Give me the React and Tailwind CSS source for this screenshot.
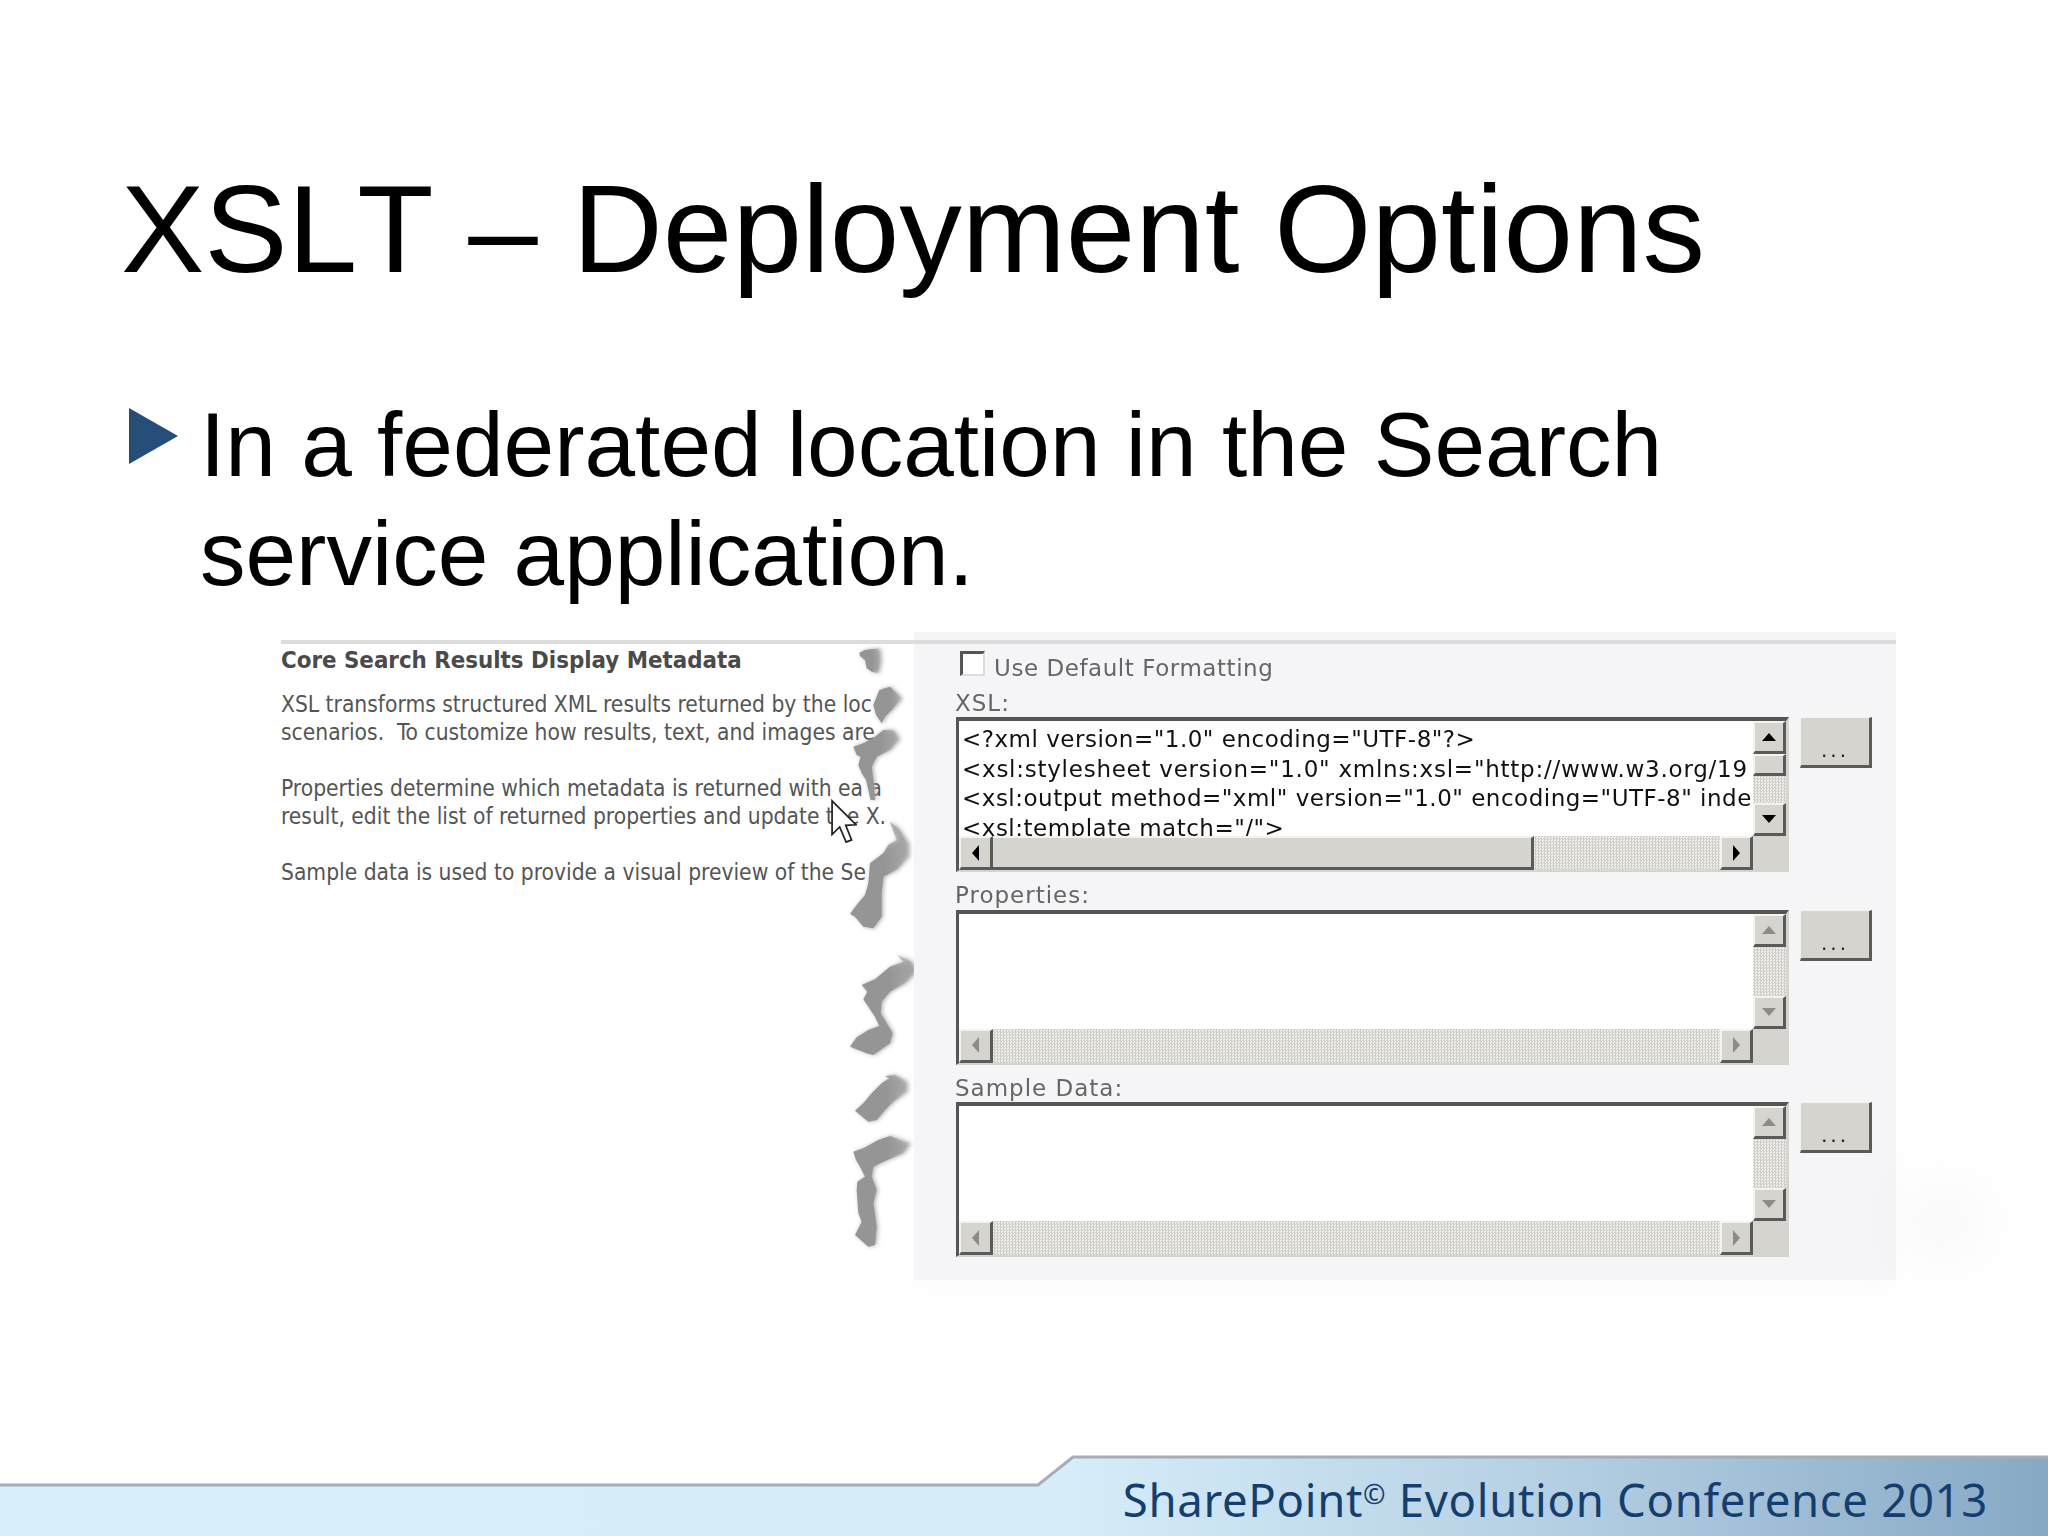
const FORM_FONT = "font-['DejaVu_Sans',sans-serif]";

function Arrow({ dir, disabled }) {
  const points = {
    up: '8,4 15,12 1,12',
    down: '1,4 15,4 8,12',
    left: '11,0 11,16 4,8',
    right: '5,0 5,16 12,8',
  };
  return (
    <svg viewBox="0 0 16 16" className="w-[16px] h-[16px]">
      <polygon points={points[dir]} fill={disabled ? '#8d8d88' : '#000000'} />
    </svg>
  );
}

function ScrollBtn({ dir, disabled, className }) {
  return (
    <div className={`flex items-center justify-center bg-[#d5d4cf] border-t-2 border-l-2 border-t-[#f4f3f0] border-l-[#f4f3f0] border-r-[3px] border-b-[3px] border-r-[#5a5a5a] border-b-[#5a5a5a] ${className}`}>
      <Arrow dir={dir} disabled={disabled} />
    </div>
  );
}

const track = 'bg-[repeating-conic-gradient(#cfcdc7_0_25%,#f1f0ed_0_50%)] bg-size-[3px_3px]';

function Field({ label, lines }) {
  const active = !!lines;
  return (
    <div className="flex flex-col">
      <div className="h-[37.5px] text-[23px] leading-[26px] pt-[10px] tracking-[1px] text-[#666] whitespace-nowrap">{label}</div>
      <div className="flex gap-[11px] items-start ml-[1px]">
        <div className="w-[833px] h-[155px] bg-white border-t-[4px] border-l-[3px] border-[#555] border-r-[3px] border-b-2 border-r-[#d5d4cf] border-b-[#d5d4cf] flex flex-col">
          <div className="flex flex-1 min-h-0">
            <div className="flex-1 min-w-0 overflow-hidden pl-[3px] pt-[4px] text-[#111] text-[23px] leading-[29.6px] tracking-[0.5px] whitespace-pre">
              {active && lines.map((l, i) => <div key={l} className={i === 1 ? 'tracking-[0.75px]' : ''}>{l}</div>)}
            </div>
            <div className="w-[33px] flex flex-col">
              <ScrollBtn dir="up" disabled={!active} className="h-[33px]" />
              {active && <div className="h-[22px] bg-[#d5d4cf] border-t-2 border-l-2 border-[#f4f3f0] border-r-[3px] border-r-[#5a5a5a] border-b-[3px] border-b-[#5a5a5a]" />}
              <div className={`flex-1 ${track}`} />
              <ScrollBtn dir="down" disabled={!active} className="h-[33px]" />
            </div>
          </div>
          <div className="h-[34px] flex">
            <ScrollBtn dir="left" disabled={!active} className="w-[34px]" />
            {active && <div className="w-[541px] bg-[#d5d4cf] border-t-2 border-[#f4f3f0] border-r-[3px] border-r-[#5a5a5a] border-b-[3px] border-b-[#5a5a5a]" />}
            <div className={`flex-1 ${track}`} />
            <ScrollBtn dir="right" disabled={!active} className="w-[33px]" />
            <div className="w-[33px] bg-[#d5d4cf]" />
          </div>
        </div>
        <div className="w-[72px] h-[51px] bg-[#d5d4cf] border-t border-l border-[#f4f3f0] border-r-[3px] border-b-[3px] border-r-[#5a5a5a] border-b-[#5a5a5a] flex items-end justify-center text-[#222] text-[20px] leading-[30px] tracking-[3px]">...</div>
      </div>
    </div>
  );
}

// traced from the torn edge, 3 units per pixel
const tears = [
  '58,38 75,30 118,25 122,60 115,100 95,95 80,85 75,60 60,48',
  '100,195 118,150 150,140 185,175 160,205 135,230 125,250 108,225',
  '40,320 70,310 105,290 130,270 160,270 178,298 150,330 110,350 95,380 100,420 105,480 92,480 78,420 65,400 55,375 62,350 50,345',
  '150,545 175,565 205,610 205,650 170,690 130,710 125,760 125,830 100,865 70,860 45,830 30,822 50,795 75,765 85,730 90,670 130,640 145,615 170,600',
  '65,1035 105,1018 150,980 190,965 172,945 215,965 228,995 195,1030 150,1055 125,1085 122,1120 140,1150 158,1180 150,1210 100,1245 80,1240 30,1220 50,1192 85,1170 118,1158 105,1130 85,1100 70,1078 82,1055',
  '135,1308 165,1305 200,1325 200,1355 160,1385 135,1410 110,1440 85,1445 45,1412 70,1390 95,1360 125,1330 148,1315',
  '40,1535 70,1525 115,1500 150,1488 210,1510 190,1540 130,1565 100,1580 95,1610 110,1650 100,1690 110,1760 105,1815 85,1820 45,1785 65,1745 55,1720 50,1650 52,1625 75,1610 60,1580 48,1560',
];

function TornEdge() {
  return (
    <svg viewBox="0 0 240 1860" className="absolute left-[580px] top-[8px] w-[80px] h-[620px]">
      <defs>
        <linearGradient id="tear">
          <stop offset="0" stopColor="#959595" />
          <stop offset="0.6" stopColor="#959595" />
          <stop offset="1" stopColor="#959595" stopOpacity="0" />
        </linearGradient>
        <filter id="soft" x="-30%" y="-30%" width="160%" height="160%">
          <feGaussianBlur stdDeviation="7" />
        </filter>
      </defs>
      <g fill="#a8a8a8" filter="url(#soft)">
        {tears.map((p) => <polygon key={p} points={p} transform="translate(4 0)" />)}
      </g>
      <g fill="url(#tear)">
        {tears.map((p) => <polygon key={p} points={p} />)}
      </g>
    </svg>
  );
}

export default function App() {
  return (
    <div className="w-[2048px] h-[1536px] bg-white flex flex-col overflow-hidden font-['Liberation_Sans',Arial,sans-serif] text-black">
      <h1 className="pt-[166px] pl-[121px] h-[291px] text-[125px] leading-[125px] [font-kerning:none] whitespace-nowrap">XSLT – Deployment Options</h1>

      <div className="mt-[100px] flex pl-[129px]">
        <svg viewBox="0 0 49 56" className="w-[49px] h-[56px] mt-[17px] shrink-0">
          <polygon points="0,0 49,28 0,56" fill="#254e7a" />
        </svg>
        <p className="ml-[22px] text-[91px] leading-[108.5px]">
          In a federated location in the Search<br />service application.
        </p>
      </div>

      {/* pasted screenshot */}
      <div className="mt-[24px] flex ml-[260px] w-[1636px] h-[648px]">
        <div className={`relative w-[654px] pl-[21px] pt-[8px] ${FORM_FONT}`}>
          <div className="border-t-[4px] border-[#dcdcdc] pt-[1px] text-[#555] whitespace-pre [font-stretch:condensed]">
            <div className="font-bold text-[23.8px] leading-[30px] text-[#4a4a4a]">Core Search Results Display Metadata</div>
            <div className="mt-[15px] text-[22.6px] leading-[28px]">
              <div>XSL transforms structured XML results returned by the loc</div>
              <div>scenarios.  To customize how results, text, and images are</div>
              <div className="mt-[28px]">Properties determine which metadata is returned with ea a</div>
              <div>result, edit the list of returned properties and update the X.</div>
              <div className="mt-[28px]">Sample data is used to provide a visual preview of the Se</div>
            </div>
          </div>
          <TornEdge />
          <svg viewBox="0 0 12 20" className="absolute left-[571px] top-[167px] w-[26px] h-[45px]">
            <polygon points="0.5,0.5 0.5,16 4,12.5 7,19.5 9.5,18.5 6.8,11.8 11.5,11.5" fill="#fff" stroke="#222" strokeWidth="0.8" />
          </svg>
        </div>

        <div className={`relative w-[982px] bg-[#f5f4f6] pt-[8px] pl-[41px] shadow-[0_10px_20px_rgba(0,0,0,0.015)] ${FORM_FONT}`}>
          <div className="absolute left-full top-[550px] w-[90px] h-[80px] bg-[#eeeeee] blur-xl opacity-30" />
          <div className="border-t-[4px] border-[#dcdcdc] ml-[-41px]" />
          <div className="flex items-center mt-[7px] ml-[5px] h-[25px]">
            <div className="w-[25px] h-[25px] bg-white border-t-[3px] border-l-[3px] border-[#555] border-r-2 border-b-2 border-r-[#ddd] border-b-[#ddd]" />
            <span className="ml-[9px] mt-[10px] text-[23px] tracking-[0.55px] text-[#666] whitespace-nowrap">Use Default Formatting</span>
          </div>
          <div className="mt-[3.5px] flex flex-col">
            <Field label="XSL:" lines={[
              '<?xml version="1.0" encoding="UTF-8"?>',
              '<xsl:stylesheet version="1.0" xmlns:xsl="http://www.w3.org/19',
              '<xsl:output method="xml" version="1.0" encoding="UTF-8" inde',
              '<xsl:template match="/">',
            ]} />
            <Field label="Properties:" />
            <Field label="Sample Data:" />
          </div>
        </div>
      </div>

      {/* footer band */}
      <div className="relative mt-auto h-[86px] flex justify-end items-end pr-[60px] pb-[7px]">
        <svg viewBox="0 0 2048 86" className="absolute inset-0 w-[2048px] h-[86px]">
          <defs>
            <linearGradient id="band" x1="0" x2="2048" y1="0" y2="0" gradientUnits="userSpaceOnUse">
              <stop offset="0" stopColor="#d8eefa" />
              <stop offset="0.52" stopColor="#d6edf9" />
              <stop offset="0.75" stopColor="#b6d1e4" />
              <stop offset="1" stopColor="#87a9c5" />
            </linearGradient>
          </defs>
          <path d="M0 35 H1038 L1073 7 H2048 V86 H0 Z" fill="url(#band)" />
          <path d="M0 35 H1038 L1073 7 H2048" fill="none" stroke="#a4aeb6" strokeWidth="3" />
        </svg>
        <div className="relative font-['Noto_Sans',sans-serif] text-[45.5px] leading-[60px] tracking-[0.68px] text-[#143e70] whitespace-nowrap">
          SharePoint<sup className="text-[27px]">©</sup> Evolution Conference 2013
        </div>
      </div>
    </div>
  );
}
